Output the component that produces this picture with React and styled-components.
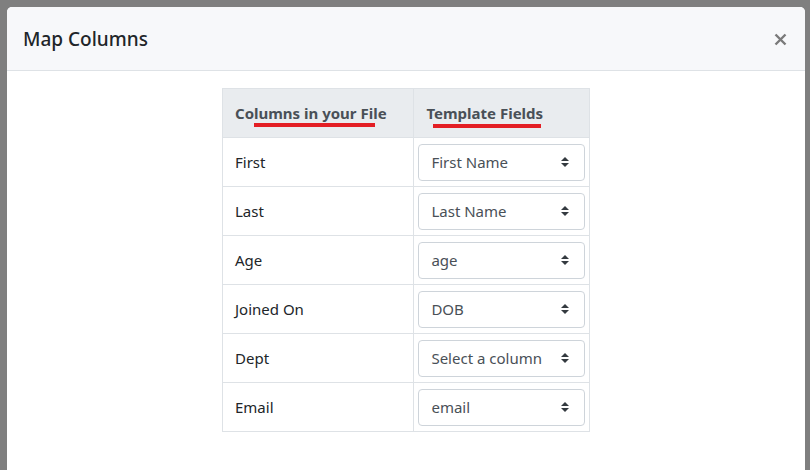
import React from 'react'
import styled, { createGlobalStyle } from 'styled-components'

const GlobalStyle = createGlobalStyle`
  html, body {
    margin: 0;
    padding: 0;
    height: 100%;
    background: #7f7f7f;
    overflow: hidden;
    font-family: "Noto Sans", "Open Sans", "Liberation Sans", sans-serif;
  }
`

const rows = [
  { name: 'First', field: 'First Name' },
  { name: 'Last', field: 'Last Name' },
  { name: 'Age', field: 'age' },
  { name: 'Joined On', field: 'DOB' },
  { name: 'Dept', field: 'Select a column' },
  { name: 'Email', field: 'email' },
]

const Backdrop = styled.div`
  padding: 7px 5px 0 7px;
  height: 100vh;
  box-sizing: border-box;
`

const Modal = styled.div`
  background: #fff;
  border-radius: 5px 5px 0 0;
  height: 100%;
  overflow: hidden;
`

const Header = styled.div`
  display: flex;
  align-items: center;
  justify-content: space-between;
  height: 64px;
  padding: 1px 17px 0 16px;
  box-sizing: border-box;
  background: #f7f8fa;
  border-bottom: 1px solid #dee2e6;
`

const Title = styled.h5`
  margin: 0;
  font-size: 19px;
  font-weight: 500;
  color: #212529;
`

const Close = styled.button`
  border: 0;
  background: none;
  padding: 0;
  width: 16px;
  height: 16px;
  display: flex;
  align-items: center;
  justify-content: center;
  cursor: pointer;
`

const Body = styled.div`
  padding-top: 17px;
  display: flex;
  justify-content: center;
`

const Table = styled.table`
  border-collapse: collapse;
  width: 368px;
  font-size: 15px;
  color: #212529;
`

const Th = styled.th`
  position: relative;
  height: 49px;
  padding: 0 12px;
  text-align: left;
  background: #e9ecef;
  color: #495057;
  font-weight: 700;
  border: 1px solid #dee2e6;
  width: ${p => p.$w}px;
  box-sizing: border-box;
`

const Mark = styled.span`
  position: absolute;
  left: ${p => p.$left}px;
  top: ${p => p.$top}px;
  width: ${p => p.$w}px;
  height: 4px;
  background: #e31e24;
`

const Td = styled.td`
  height: 48px;
  padding: 0 ${p => (p.$tight ? 4 : 12)}px;
  border: 1px solid #dee2e6;
`

const SelectBox = styled.div`
  display: flex;
  align-items: center;
  justify-content: space-between;
  height: 37px;
  box-sizing: border-box;
  padding: 0 15px 0 12px;
  border: 1px solid #ced4da;
  border-radius: 4px;
  color: #495057;
  background: #fff;
`

const Arrows = () => (
  <svg width="8" height="10" viewBox="0 0 4 5">
    <path fill="#343a40" d="M2 0L0 2h4zm0 5L0 3h4z" />
  </svg>
)

export default function App() {
  return (
    <>
      <GlobalStyle />
      <Backdrop>
        <Modal>
          <Header>
            <Title>Map Columns</Title>
            <Close aria-label="Close">
              <svg width="13" height="13" viewBox="0 0 13 13">
                <path d="M1.5 1.5l10 10M11.5 1.5l-10 10" stroke="#7a7a7a" strokeWidth="2.4" />
              </svg>
            </Close>
          </Header>
          <Body>
            <Table>
              <thead>
                <tr>
                  <Th $w={192}>
                    Columns in your File
                    <Mark $left={31} $top={34} $w={121} />
                  </Th>
                  <Th $w={176}>
                    Template Fields
                    <Mark $left={19} $top={35} $w={108} />
                  </Th>
                </tr>
              </thead>
              <tbody>
                {rows.map(r => (
                  <tr key={r.name}>
                    <Td>{r.name}</Td>
                    <Td $tight>
                      <SelectBox>
                        <span>{r.field}</span>
                        <Arrows />
                      </SelectBox>
                    </Td>
                  </tr>
                ))}
              </tbody>
            </Table>
          </Body>
        </Modal>
      </Backdrop>
    </>
  )
}
